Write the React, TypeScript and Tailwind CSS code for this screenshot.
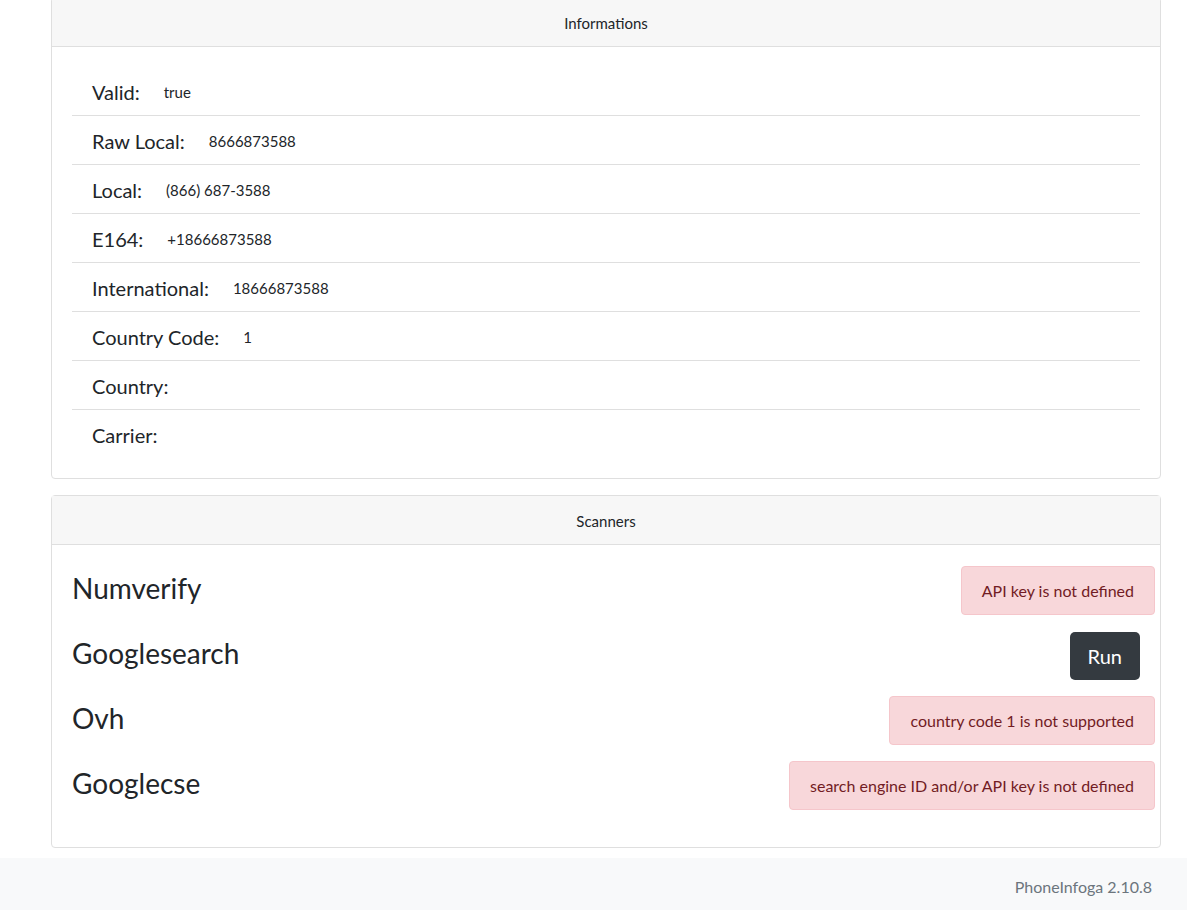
import React from "react";

const rows: [string, string][] = [
  ["Valid:", "true"],
  ["Raw Local:", "8666873588"],
  ["Local:", "(866) 687-3588"],
  ["E164:", "+18666873588"],
  ["International:", "18666873588"],
  ["Country Code:", "1"],
  ["Country:", ""],
  ["Carrier:", ""],
];

function Alert({ text }: { text: string }) {
  return (
    <div className="mr-[-15px] flex h-[49px] items-center rounded-[4px] border border-[#f5c6cb] bg-[#f8d7da] px-5 text-[16px] text-[#721c24]">
      {text}
    </div>
  );
}

export default function App() {
  return (
    <div className="min-h-[910px] bg-white font-['Lato',sans-serif] text-[#212529]">
      <div className="ml-[51px] w-[1110px] pb-[10px]">
        <div className="mt-[-3px] rounded-[4px] border border-[#dfdfdf]">
          <div className="flex h-[49px] items-center justify-center border-b border-[#dfdfdf] bg-[#f7f7f7] pt-[2px] text-[15px]">
            Informations
          </div>
          <div className="p-5">
            {rows.map(([label, value], i) => (
              <div
                key={label}
                className={`flex items-center gap-[24px] px-5 pt-[2px] ${i < rows.length - 1 ? "h-[49px] border-b border-[#dfdfdf]" : "h-[48px]"}`}
              >
                <span className="text-[20px]">{label}</span>
                <span className="text-[15px]">{value}</span>
              </div>
            ))}
          </div>
        </div>

        <div className="mt-4 rounded-[4px] border border-[#dfdfdf]">
          <div className="flex h-[49px] items-center justify-center border-b border-[#dfdfdf] bg-[#f7f7f7] pt-[2px] text-[15px]">
            Scanners
          </div>
          <div className="flex flex-col gap-4 px-5 pt-[21px] pb-[37px]">
            <div className="flex h-[49px] items-center justify-between">
              <span className="mb-[6px] text-[28px]">Numverify</span>
              <Alert text="API key is not defined" />
            </div>
            <div className="flex h-[49px] items-center justify-between">
              <span className="mb-[6px] text-[28px]">Googlesearch</span>
              <button className="h-[48px] rounded-[5px] bg-[#343a40] px-[18px] text-[20px] text-white">
                Run
              </button>
            </div>
            <div className="flex h-[49px] items-center justify-between">
              <span className="mb-[6px] text-[28px]">Ovh</span>
              <Alert text="country code 1 is not supported" />
            </div>
            <div className="flex h-[49px] items-center justify-between">
              <span className="mb-[6px] text-[28px]">Googlecse</span>
              <Alert text="search engine ID and/or API key is not defined" />
            </div>
          </div>
        </div>
      </div>
      <footer className="flex h-[58px] items-center justify-end bg-[#f8f9fa] pr-[35px] text-[16px] text-[#6c757d]">
        PhoneInfoga 2.10.8
      </footer>
    </div>
  );
}
